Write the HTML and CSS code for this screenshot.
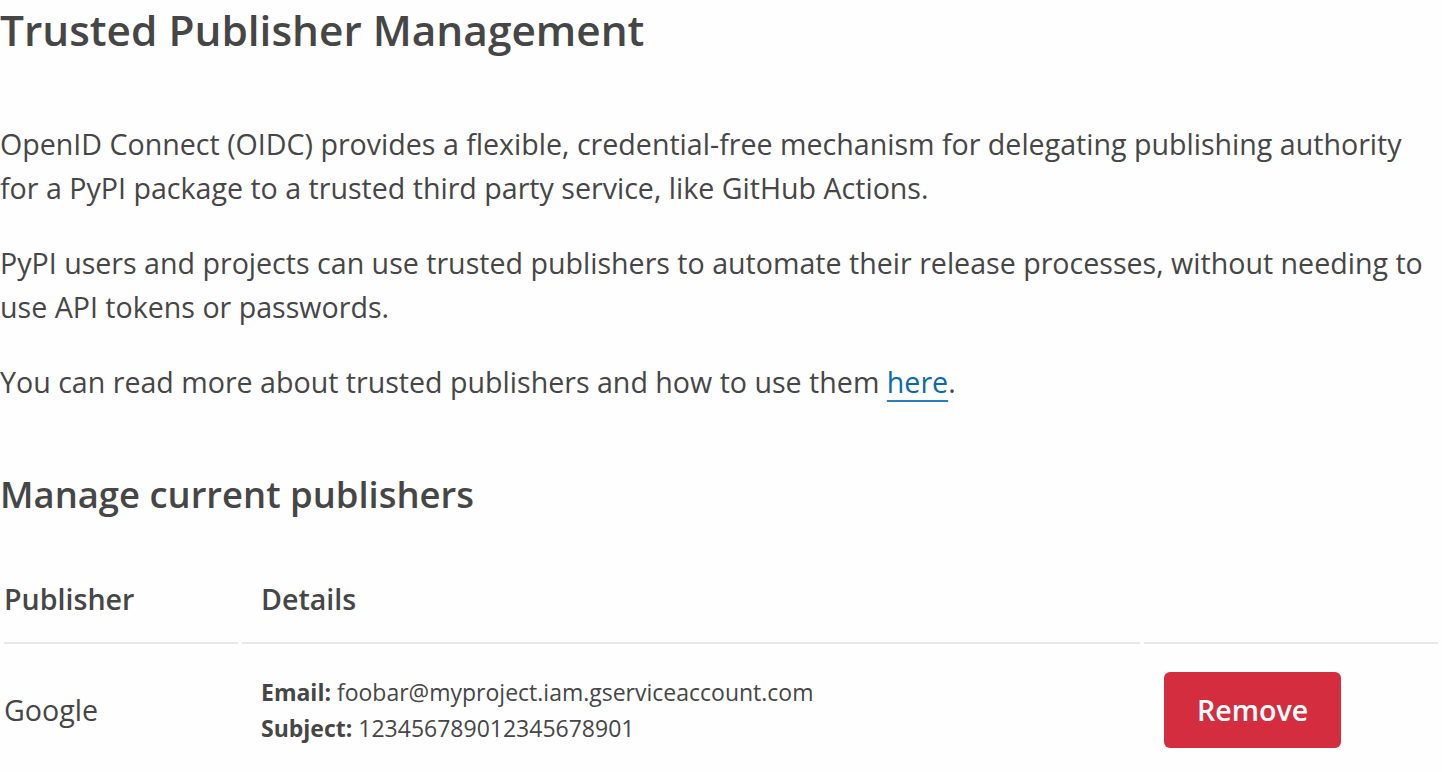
FILE: index.html
```html
<!DOCTYPE html>
<html lang="en">
<head>
<meta charset="utf-8">
<title>Trusted Publisher Management</title>
<link rel="stylesheet" href="styles.css">
</head>
<body>
<main class="page">
  <h1 class="page-title">Trusted Publisher Management</h1>
  <p class="lead">OpenID Connect (OIDC) provides a flexible, credential-free mechanism for delegating publishing authority for a PyPI package to a trusted third party service, like GitHub Actions.</p>
  <p class="lead">PyPI users and projects can use trusted publishers to automate their release processes, without needing to use API tokens or passwords.</p>
  <p class="lead">You can read more about trusted publishers and how to use them <a class="link" href="#">here</a>.</p>

  <h2 class="section-title">Manage current publishers</h2>
  <table class="table">
    <thead>
      <tr>
        <th class="col-publisher">Publisher</th>
        <th class="col-details">Details</th>
        <th class="col-actions"></th>
      </tr>
    </thead>
    <tbody>
      <tr>
        <td class="col-publisher">Google</td>
        <td class="col-details details">
          <div><strong>Email:</strong> foobar@myproject.iam.gserviceaccount.com</div>
          <div><strong>Subject:</strong> 123456789012345678901</div>
        </td>
        <td class="col-actions"><button class="button button-danger" type="button">Remove</button></td>
      </tr>
    </tbody>
  </table>
</main>
</body>
</html>
```
FILE: styles.css
```css
html, body {
  margin: 0;
  padding: 0;
  background: #fefefe;
}

body {
  font-family: "Open Sans", "Noto Sans", sans-serif;
  color: #464646;
  font-size: 28.6px;
  line-height: 43.5px;
}

.page {
  width: 1442px;
}

.page-title {
  margin: 5px 0 67px;
  font-size: 42.4px;
  line-height: 50px;
  font-weight: 600;
}

.lead {
  margin: 0 0 32px;
}

.link {
  color: #0b6aab;
  text-decoration: underline;
  text-decoration-thickness: 2px;
  text-underline-offset: 7px;
  text-decoration-color: #2a7fba;
}

.section-title {
  margin: 68px 0 35px;
  font-size: 36.4px;
  line-height: 44px;
  font-weight: 600;
}

.table {
  width: 100%;
  table-layout: fixed;
  border-collapse: separate;
  border-spacing: 4px;
}

.table th,
.table td {
  box-sizing: border-box;
  padding: 0 19px;
  text-align: left;
  vertical-align: middle;
}

.table th {
  padding-top: 22px;
  padding-bottom: 22px;
  font-weight: 600;
  border-bottom: 2px solid #e8e8e8;
}

.table td {
  padding-top: 24px;
  padding-bottom: 24px;
}

.table .col-publisher {
  width: 234px;
  padding-left: 0;
}

.table .col-details {
  width: 898px;
}

.table .col-actions {
  width: 294px;
  padding-left: 20px;
}

.details {
  font-size: 23px;
  line-height: 36px;
}

.details strong {
  font-weight: 700;
}

.button {
  font-family: inherit;
  font-size: 28.6px;
  line-height: 44px;
  font-weight: 600;
  padding: 16px 33px;
  border: 0;
  border-radius: 6px;
  cursor: pointer;
}

.button-danger {
  background: #d52d40;
  color: #ffffff;
}
```
